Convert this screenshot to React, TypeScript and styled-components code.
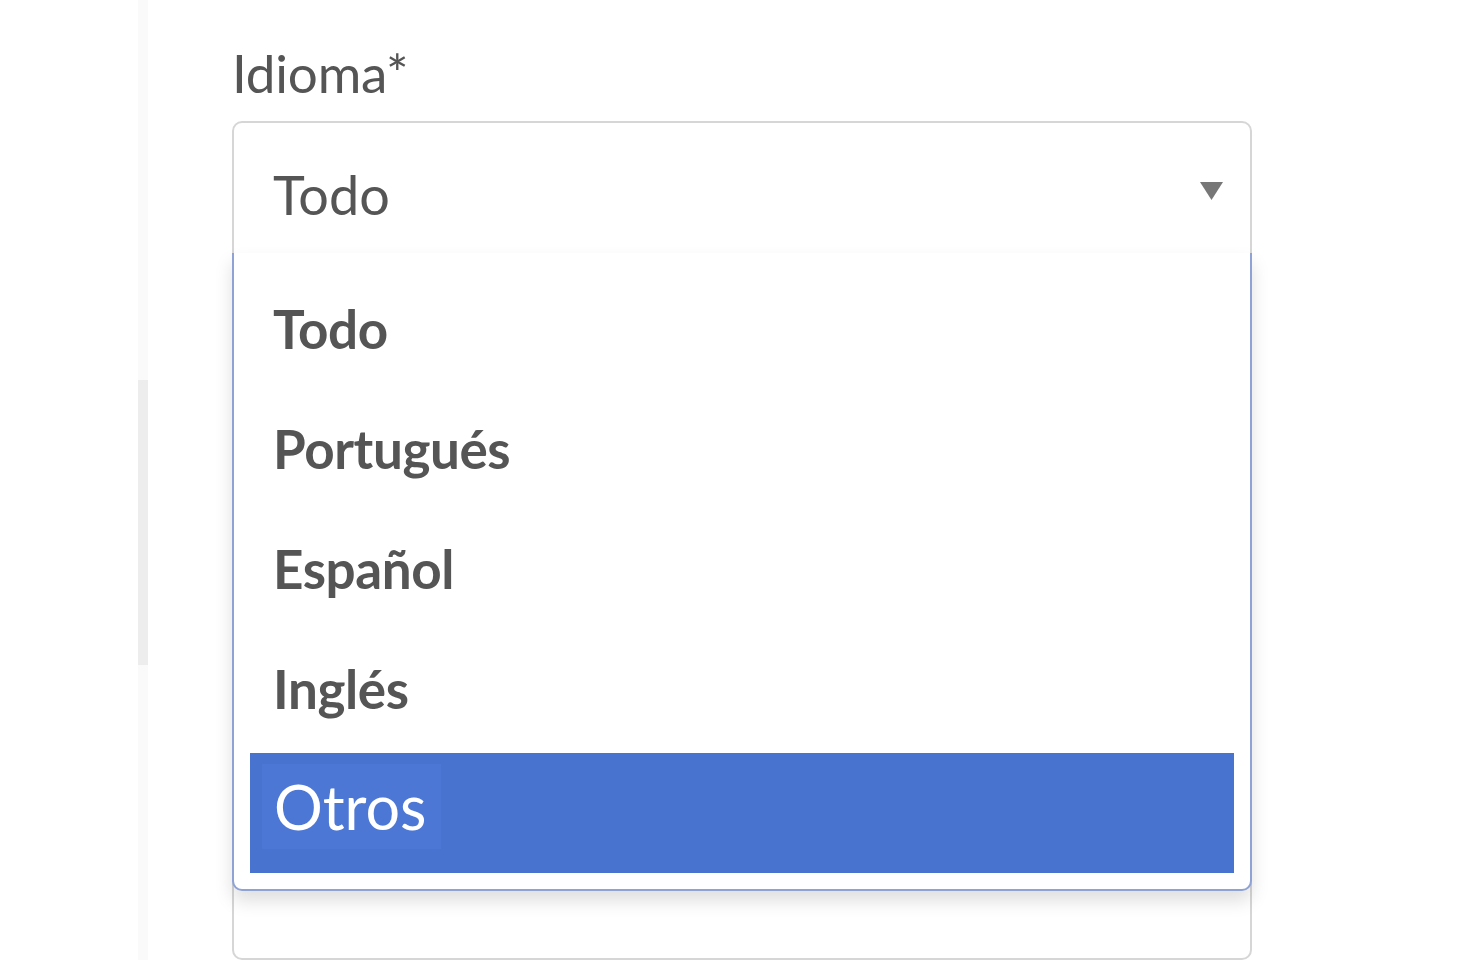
import React from "react";
import styled, { createGlobalStyle } from "styled-components";

const Global = createGlobalStyle`
  html, body { margin: 0; padding: 0; background: #ffffff; }
  body { font-family: Lato, "Open Sans", sans-serif; overflow: hidden; }
`;

const Page = styled.div`
  display: flex;
  height: 960px;
  padding-left: 138px;
  box-sizing: border-box;
`;

const Strip = styled.div`
  width: 10px;
  height: 100%;
  background: #fafafa;
  padding-top: 380px;
  box-sizing: border-box;
`;

const StripMark = styled.div`
  height: 285px;
  background: #ededed;
`;

const Form = styled.div`
  margin-left: 84px;
  width: 1020px;
  padding-top: 41px;
  display: flex;
  flex-direction: column;
`;

const Label = styled.label`
  display: block;
  font-size: 53px;
  line-height: 64px;
  color: #555555;
  margin-bottom: 16px;
  letter-spacing: -0.2px;
`;

const SelectWrap = styled.div`
  position: relative;
  z-index: 2;
`;

const SelectBox = styled.div`
  height: 148px;
  box-sizing: border-box;
  border: 2px solid #d6d6d6;
  border-radius: 10px;
  display: flex;
  align-items: center;
  justify-content: space-between;
  padding: 0 26px 0 39px;
  background: #fff;
`;

const Value = styled.span`
  font-size: 54px;
  line-height: 1.2;
  color: #555555;
`;

const Arrow = styled.svg`
  width: 25px;
  height: 20px;
  margin-top: -8px;
`;

const Menu = styled.ul`
  position: absolute;
  top: 132px;
  left: 0;
  right: 0;
  margin: 0;
  list-style: none;
  background: #ffffff;
  border: 2px solid #8ea2d6;
  border-top: none;
  border-radius: 0 0 10px 10px;
  padding: 20px 16px 16px;
  box-shadow: 0 10px 18px rgba(0, 0, 0, 0.13);
`;

const Option = styled.li<{ $active?: boolean }>`
  height: 120px;
  box-sizing: border-box;
  display: flex;
  align-items: center;
  padding: ${(p) => (p.$active ? "0 0 13px 12px" : "0 0 8px 23px")};
  font-size: ${(p) => (p.$active ? "61px" : "53px")};
  letter-spacing: ${(p) => (p.$active ? "0" : "-0.4px")};
  line-height: 1.2;
  font-weight: ${(p) => (p.$active ? 400 : 700)};
  color: ${(p) => (p.$active ? "#ffffff" : "#555555")};
  background: ${(p) => (p.$active ? "#4874d0" : "transparent")};
`;

const ActiveText = styled.span`
  background: #4c77d5;
  padding: 6px 14px 5px 12px;
`;

const NextBox = styled.div`
  margin-top: 580px;
  height: 200px;
  border: 2px solid #d6d6d6;
  border-radius: 10px;
  background: #fff;
  position: relative;
  z-index: 1;
`;

const options = ["Todo", "Portugués", "Español", "Inglés", "Otros"];

export default function App() {
  return (
    <>
      <Global />
      <Page>
        <Strip>
          <StripMark />
        </Strip>
        <Form>
          <Label>Idioma*</Label>
          <SelectWrap>
            <SelectBox>
              <Value>Todo</Value>
              <Arrow viewBox="0 0 25 20">
                <path d="M1 1 L24 1 L12.5 19 Z" fill="#777777" />
              </Arrow>
            </SelectBox>
            <Menu>
              {options.map((o) =>
                o === "Otros" ? (
                  <Option key={o} $active>
                    <ActiveText>{o}</ActiveText>
                  </Option>
                ) : (
                  <Option key={o}>{o}</Option>
                )
              )}
            </Menu>
          </SelectWrap>
          <NextBox />
        </Form>
      </Page>
    </>
  );
}
